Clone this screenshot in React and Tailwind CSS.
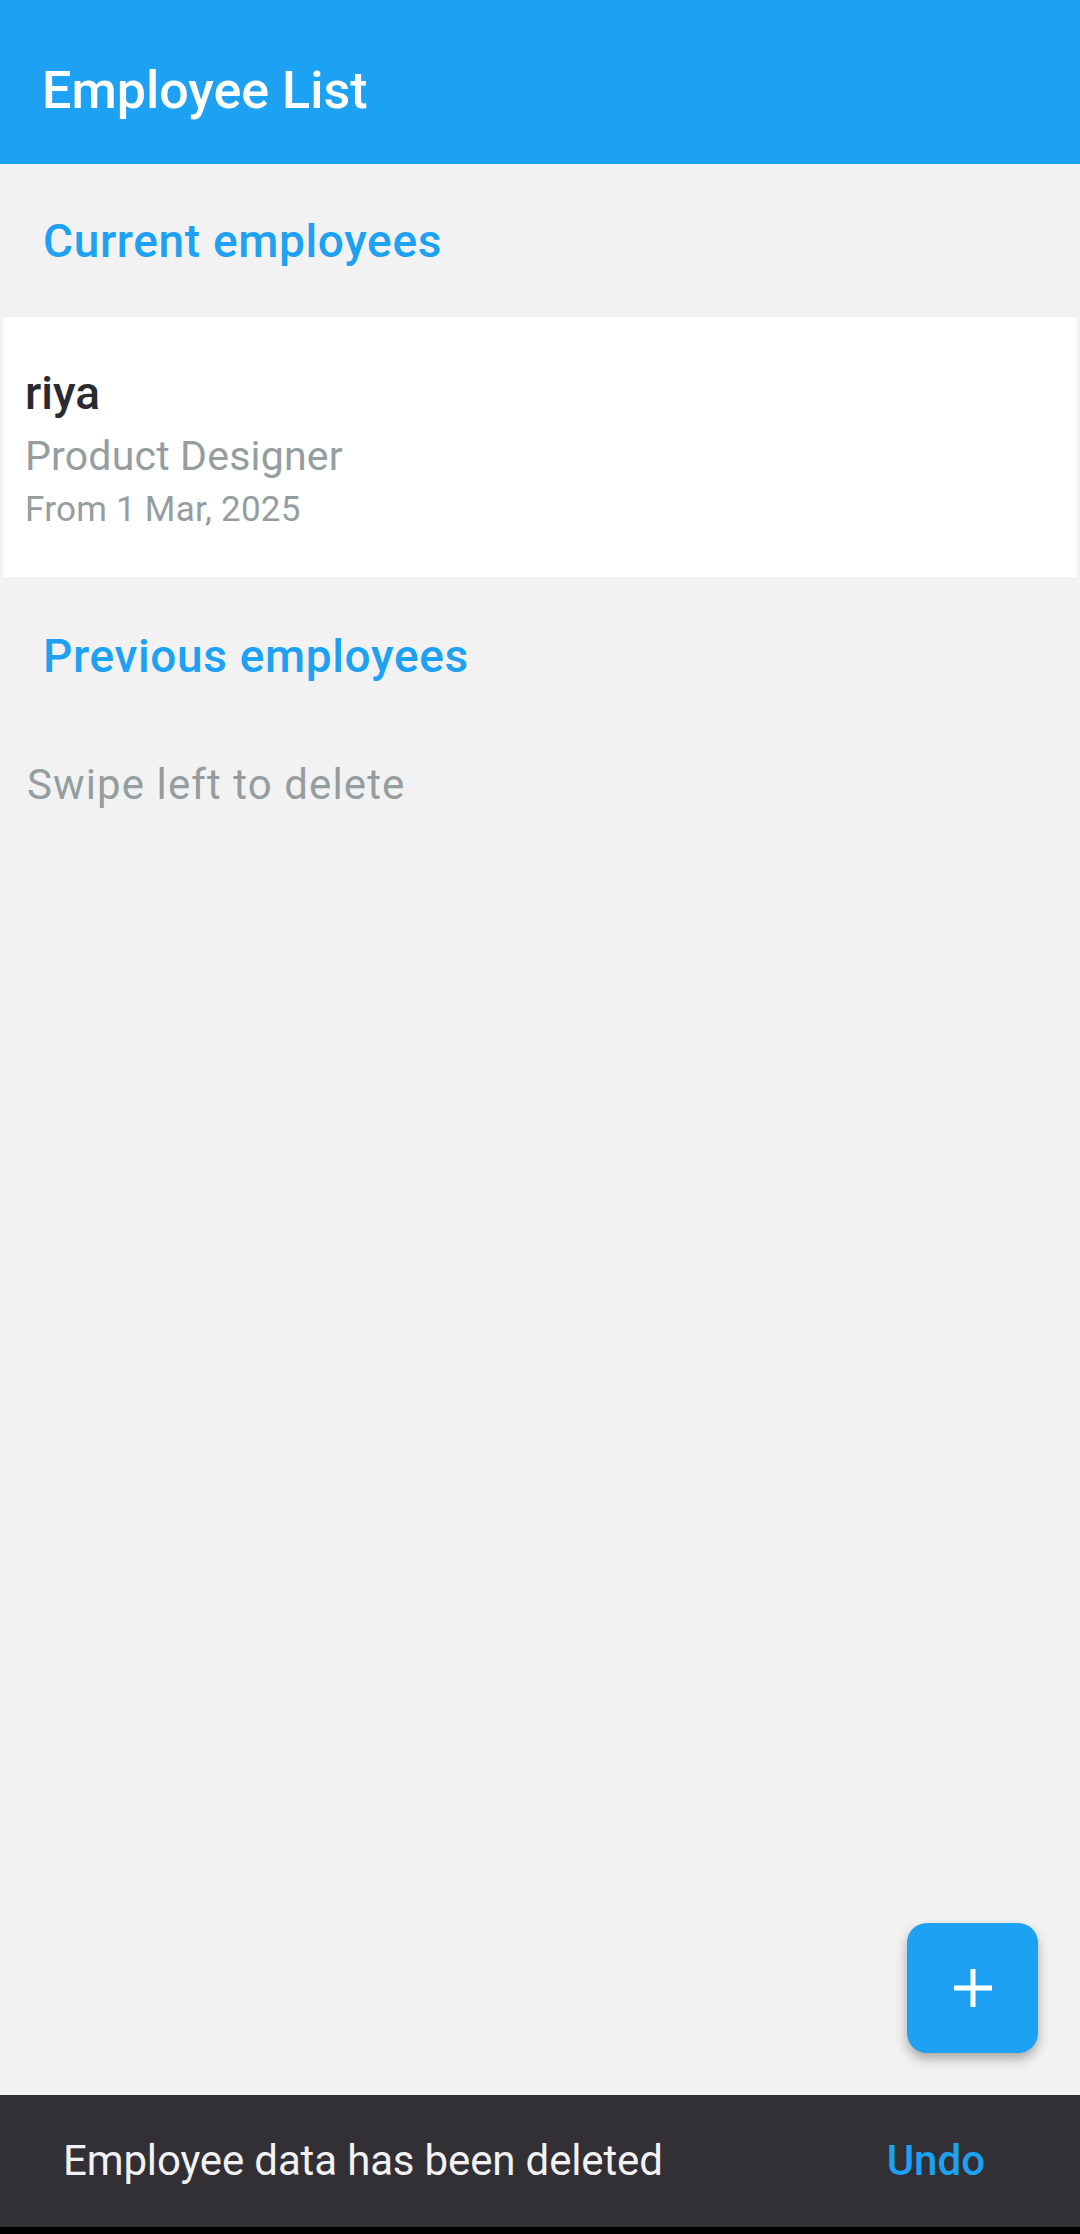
import React from "react";

export default function App() {
  return (
    <div
      className="relative h-[2234px] w-[1080px] overflow-hidden bg-[#f2f2f2]"
      style={{ fontFamily: "Roboto, 'Noto Sans', sans-serif" }}
    >
      <header className="h-[164px] bg-[#1da1f2] pl-[42px] pt-[65px]">
        <h1 className="text-[52px] leading-[52px] font-medium text-white">Employee List</h1>
      </header>

      <div className="flex flex-col">
        <h2 className="ml-[43px] mt-[54px] text-[46px] leading-[46px] font-medium tracking-[0.65px] text-[#1da1f2]">
          Current employees
        </h2>

        <div className="mx-[3px] mt-[53px] flex flex-col bg-white pl-[22px] pt-[53px] pb-[50px]">
          <div className="text-[46px] leading-[46px] font-medium text-[#2b2a30]">riya</div>
          <div className="mt-[20px] text-[41px] leading-[41px] tracking-[0.2px] text-[#959d9f]">Product Designer</div>
          <div className="mt-[15px] text-[35px] leading-[35px] tracking-[0.25px] text-[#959d9f]">From 1 Mar, 2025</div>
        </div>

        <h2 className="ml-[43px] mt-[56px] text-[46px] leading-[46px] font-medium tracking-[0.65px] text-[#1da1f2]">
          Previous employees
        </h2>

        <p className="ml-[27px] mt-[85px] text-[42px] leading-[42px] tracking-[1.1px] text-[#959d9f]">Swipe left to delete</p>
      </div>

      <button className="absolute right-[42px] bottom-[181px] flex h-[130px] w-[131px] items-center justify-center rounded-[20px] bg-[#1da1f2] shadow-[0_6px_12px_rgba(0,0,0,0.3)]">
        <svg width="40" height="40" viewBox="0 0 40 40">
          <path d="M20 1 V39 M1 20 H39" stroke="white" strokeWidth="5" />
        </svg>
      </button>

      <div className="absolute bottom-[7px] left-0 right-0 flex h-[132px] items-start bg-[#323035] pt-[45px]">
        <span className="ml-[63px] text-[42px] leading-[42px] tracking-[-0.15px] text-[#f2f2f2]">Employee data has been deleted</span>
        <span className="ml-auto mr-[95px] text-[42px] leading-[42px] font-medium text-[#1da1f2]">Undo</span>
      </div>
      <div className="absolute bottom-0 left-0 right-0 h-[7px] bg-black" />
    </div>
  );
}
